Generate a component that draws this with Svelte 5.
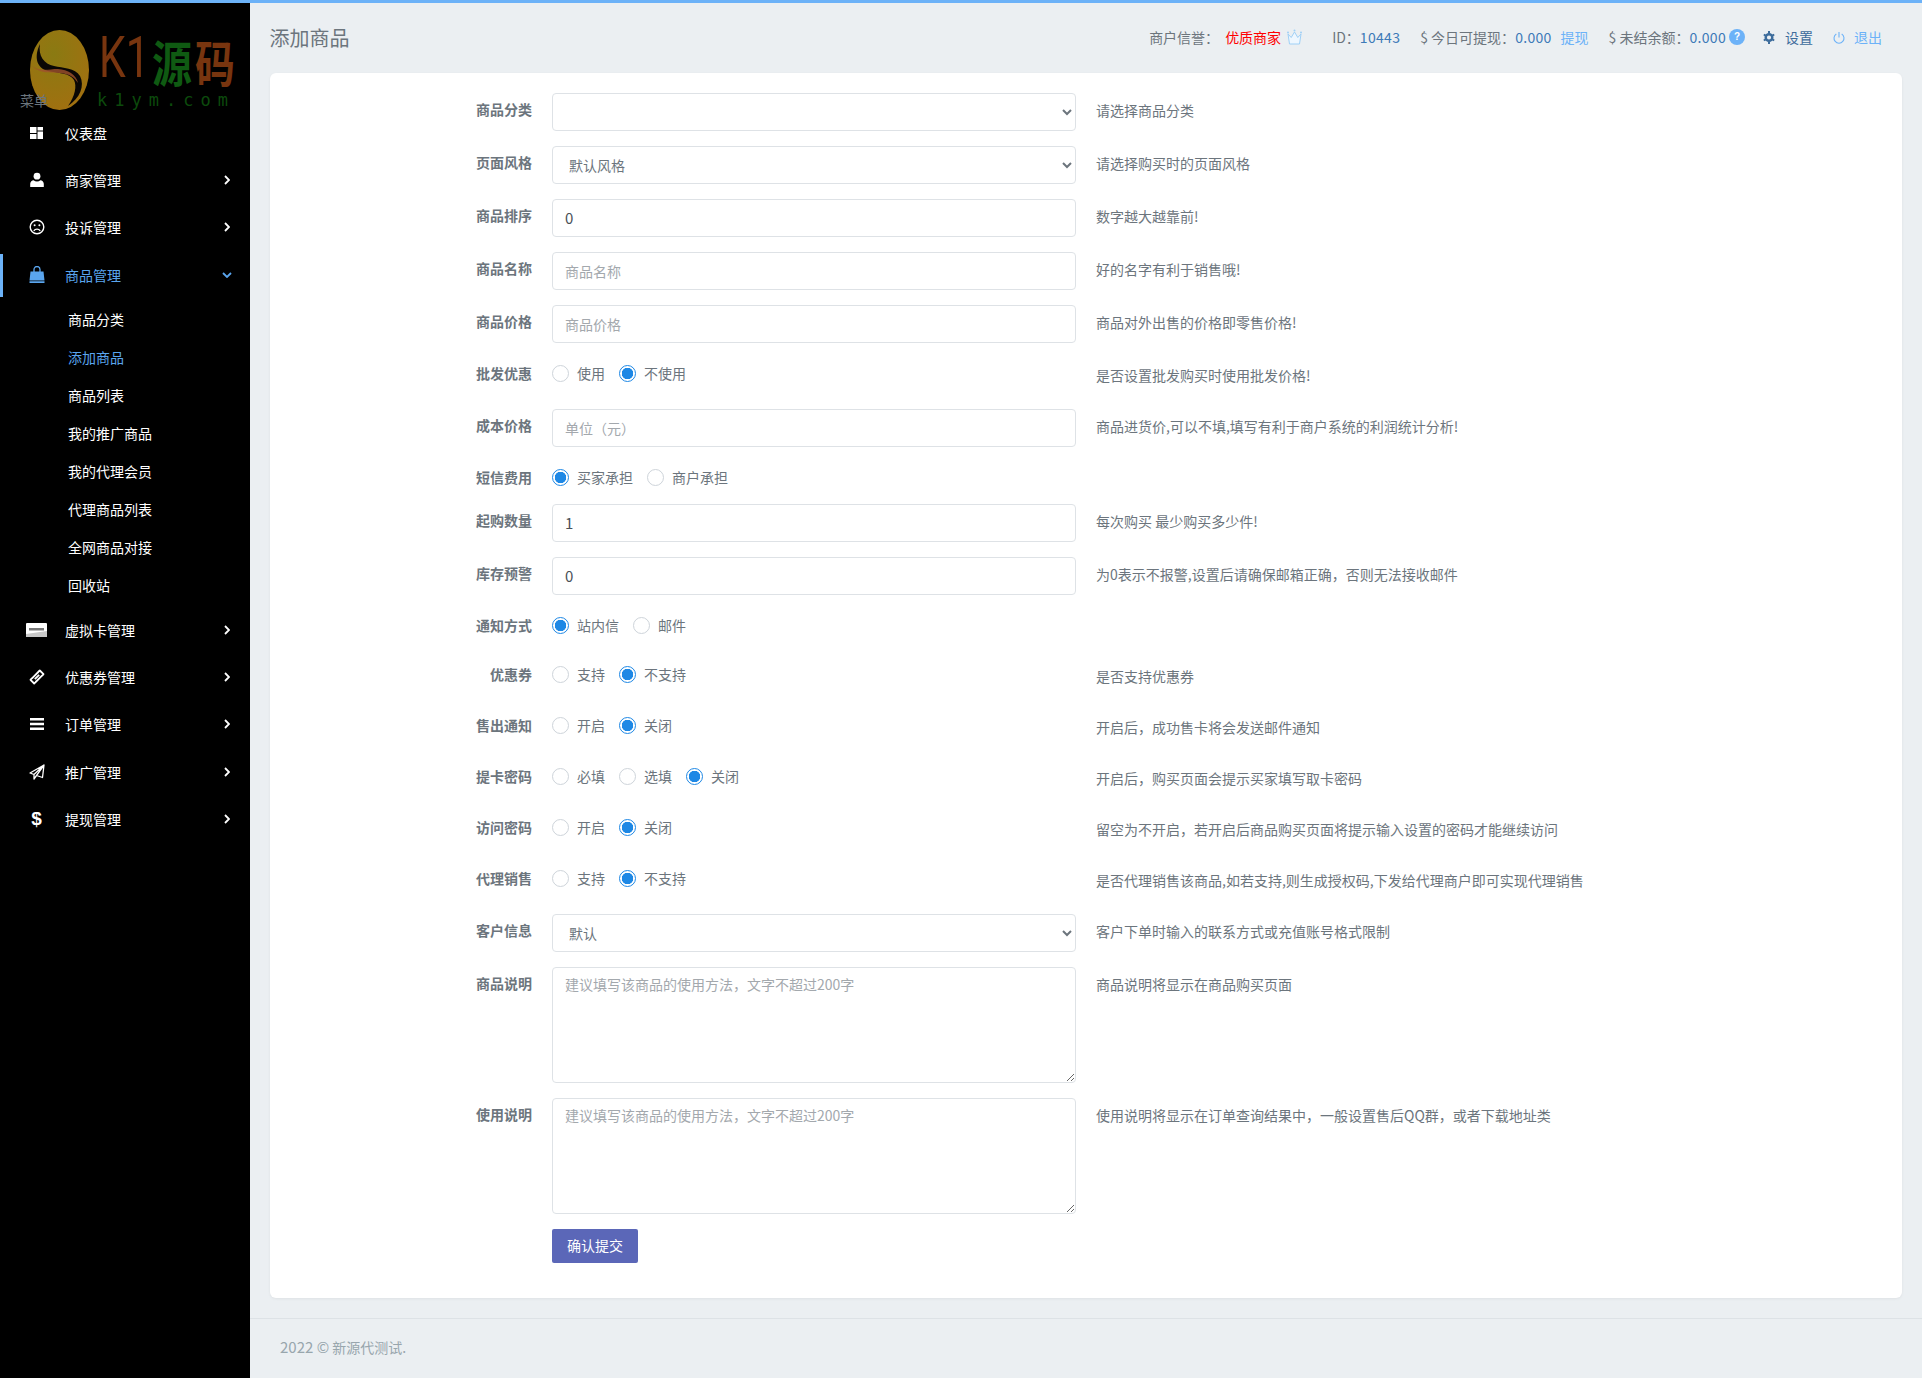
<script>
	const menu = [
		{ name: '仪表盘', icon: 'dash' },
		{ name: '商家管理', icon: 'user', more: true },
		{ name: '投诉管理', icon: 'frown', more: true },
		{ name: '商品管理', icon: 'bag', open: true },
		{ name: '虚拟卡管理', icon: 'card', more: true },
		{ name: '优惠券管理', icon: 'ticket', more: true },
		{ name: '订单管理', icon: 'bars', more: true },
		{ name: '推广管理', icon: 'plane', more: true },
		{ name: '提现管理', icon: 'dollar', more: true }
	];
	const subMenu = ['商品分类', '添加商品', '商品列表', '我的推广商品', '我的代理会员', '代理商品列表', '全网商品对接', '回收站'];

	const rows = [
		{ label: '商品分类', type: 'select', options: [''], help: '请选择商品分类' },
		{ label: '页面风格', type: 'select', options: ['默认风格'], help: '请选择购买时的页面风格' },
		{ label: '商品排序', type: 'input', value: '0', help: '数字越大越靠前!' },
		{ label: '商品名称', type: 'input', placeholder: '商品名称', help: '好的名字有利于销售哦!' },
		{ label: '商品价格', type: 'input', placeholder: '商品价格', help: '商品对外出售的价格即零售价格!' },
		{ label: '批发优惠', type: 'radio', options: ['使用', '不使用'], checked: 1, help: '是否设置批发购买时使用批发价格!' },
		{ label: '成本价格', type: 'input', placeholder: '单位（元）', help: '商品进货价,可以不填,填写有利于商户系统的利润统计分析!' },
		{ label: '短信费用', type: 'radio', options: ['买家承担', '商户承担'], checked: 0, size: 'short' },
		{ label: '起购数量', type: 'input', value: '1', help: '每次购买 最少购买多少件!' },
		{ label: '库存预警', type: 'input', value: '0', help: '为0表示不报警,设置后请确保邮箱正确，否则无法接收邮件' },
		{ label: '通知方式', type: 'radio', options: ['站内信', '邮件'], checked: 0, size: 'mid' },
		{ label: '优惠券', type: 'radio', options: ['支持', '不支持'], checked: 1, help: '是否支持优惠券' },
		{ label: '售出通知', type: 'radio', options: ['开启', '关闭'], checked: 1, help: '开启后，成功售卡将会发送邮件通知' },
		{ label: '提卡密码', type: 'radio', options: ['必填', '选填', '关闭'], checked: 2, help: '开启后，购买页面会提示买家填写取卡密码' },
		{ label: '访问密码', type: 'radio', options: ['开启', '关闭'], checked: 1, help: '留空为不开启，若开启后商品购买页面将提示输入设置的密码才能继续访问' },
		{ label: '代理销售', type: 'radio', options: ['支持', '不支持'], checked: 1, help: '是否代理销售该商品,如若支持,则生成授权码,下发给代理商户即可实现代理销售' },
		{ label: '客户信息', type: 'select', options: ['默认'], help: '客户下单时输入的联系方式或充值账号格式限制' },
		{ label: '商品说明', type: 'textarea', placeholder: '建议填写该商品的使用方法，文字不超过200字', help: '商品说明将显示在商品购买页面' },
		{ label: '使用说明', type: 'textarea', placeholder: '建议填写该商品的使用方法，文字不超过200字', help: '使用说明将显示在订单查询结果中，一般设置售后QQ群，或者下载地址类' }
	];
</script>

{#snippet icon(kind)}
	{#if kind === 'dash'}
		<svg width="14" height="14" viewBox="0 0 14 14"><path fill="currentColor" d="M0 1h6.500v6H0zM7.500 1H13v3.500H7.500zM0 8h6.500v5H0zM7.500 5.500H13V13H7.500z" /></svg>
	{:else if kind === 'user'}
		<svg width="16" height="16" viewBox="0 0 16 16"><circle cx="8" cy="4.200" r="3.400" fill="currentColor" /><path fill="currentColor" d="M1.200 15v-3.200C1.200 9.600 3 8.400 4.600 8.200c1 .8 2.100 1.200 3.400 1.200s2.400-.4 3.400-1.200c1.600.2 3.400 1.400 3.400 3.600V15z" /></svg>
	{:else if kind === 'frown'}
		<svg width="16" height="16" viewBox="0 0 16 16" fill="none" stroke="currentColor" stroke-width="1.400"><circle cx="8" cy="8" r="6.800" /><circle cx="5.600" cy="6.300" r="1" fill="currentColor" stroke="none" /><circle cx="10.400" cy="6.300" r="1" fill="currentColor" stroke="none" /><path d="M4.800 11.800c1.600-2.200 4.800-2.200 6.400 0" /></svg>
	{:else if kind === 'bag'}
		<svg width="16" height="17" viewBox="0 0 16 17"><path fill="currentColor" d="M1.500 5.500h13l1 9H.5zM.5 15.200h15V17H.5z" /><path fill="none" stroke="currentColor" stroke-width="1.300" d="M5 7V3.500a3 3 0 0 1 6 0V7" /></svg>
	{:else if kind === 'card'}
		<svg width="21" height="14" viewBox="0 0 21 14"><rect width="21" height="14" rx="1" fill="#fff" /><path fill="#777" d="M3 5h15v2.500H3z" /><path fill="#c8c8c8" d="M0 11l21-3v6H0z" /></svg>
	{:else if kind === 'ticket'}
		<svg width="16" height="16" viewBox="0 0 16 16"><path fill="none" stroke="currentColor" stroke-width="1.800" stroke-linejoin="round" d="M10.800 1.500 14.500 5.200c-.8 1-.8 1-1.500 1.500L6.700 13c-.5.700-.5.700-1.500 1.500L1.500 10.800c.8-1 .8-1 1.500-1.500L9.300 3c.5-.7.500-.7 1.500-1.500z" /><path fill="currentColor" d="M9.500 5.200l1.300 1.300-4.300 4.300-1.300-1.300z" /></svg>
	{:else if kind === 'bars'}
		<svg width="14" height="12" viewBox="0 0 14 12"><path fill="currentColor" d="M0 0h14v2.400H0zM0 4.800h14v2.400H0zM0 9.600h14V12H0z" /></svg>
	{:else if kind === 'plane'}
		<svg width="16" height="16" viewBox="0 0 16 16"><path fill="none" stroke="currentColor" stroke-width="1.300" stroke-linejoin="round" d="M15 1 1 9l4 1.500L15 1l-1.500 12.500-6-2zM5 10.500V15l2.500-3.500" /></svg>
	{:else if kind === 'dollar'}
		<span class="dollar">$</span>
	{/if}
{/snippet}

<div class="page">
	<aside class="sidebar">
		<div class="logo">
			<svg class="logo-mark" width="59" height="80" viewBox="0 0 59 80">
				<defs>
					<radialGradient id="gold" cx=".4" cy=".3" r=".8">
						<stop offset="0" stop-color="#8a7a12" />
						<stop offset="1" stop-color="#a36f10" />
					</radialGradient>
				</defs>
				<ellipse cx="29.500" cy="40" rx="29.500" ry="40" fill="url(#gold)" />
				<path fill="#0a0705" d="M10 14C4 26 6 38 18 41c10 2 22 2 26 9 3 6 1 16-6 26 12-8 17-20 12-30-5-8-17-8-26-10C14 34 8 26 10 14z" />
				<path fill="#a0522d" opacity=".8" d="M2 36c8 8 18 6 28 7 10 1 14 4 18 10-2-9-10-13-20-14-10 0-18 3-26-3z" />
			</svg>
			<div class="logo-text">
				<div class="logo-name"><span class="k1">K1</span><b class="yuan">源</b><b class="ma">码</b></div>
				<div class="logo-url">k1ym.com</div>
			</div>
			<span class="menu-title">菜单</span>
		</div>

		<nav>
			{#each menu as item}
				<div class="nav-item" class:active={item.open}>
					<span class="nav-icon">{@render icon(item.icon)}</span>
					<span class="nav-name">{item.name}</span>
					{#if item.more}
						<svg class="chevron" width="6" height="10" viewBox="0 0 6 10"><path fill="none" stroke="currentColor" stroke-width="1.800" d="M1 1l4 4-4 4" /></svg>
					{:else if item.open}
						<svg class="chevron open" width="10" height="6" viewBox="0 0 10 6"><path fill="none" stroke="currentColor" stroke-width="1.800" d="M1 1l4 4 4-4" /></svg>
					{/if}
				</div>
				{#if item.open}
					<div class="sub-menu">
						{#each subMenu as sub, i}
							<div class="sub-item" class:current={i === 1}>{sub}</div>
						{/each}
					</div>
				{/if}
			{/each}
		</nav>
	</aside>

	<div class="main">
		<header class="topbar">
			<h1>添加商品</h1>
			<div class="info">
				<span class="group">商户信誉：<span class="red">优质商家</span>
					<svg class="crown" width="17" height="17" viewBox="0 0 17 17"><path fill="#eef7ff" stroke="#9fd0f6" stroke-linejoin="round" d="M2 5l3.200 3.500L8.500 3l3.300 5.500L15 5l-1.500 10h-10z" /><circle cx="2" cy="3.500" r="1" fill="#9fd0f6" /><circle cx="8.500" cy="1.500" r="1" fill="#9fd0f6" /><circle cx="15" cy="3.500" r="1" fill="#9fd0f6" /></svg>
				</span>
				<span class="group id">ID：<span class="num">10443</span></span>
				<span class="group">$ 今日可提现：<span class="num">0.000</span><a href="#top" class="link">提现</a></span>
				<span class="group">$ 未结余额：<span class="num">0.000</span><span class="help-dot">?</span></span>
				<span class="group dark">
					<svg width="12" height="13" viewBox="0 0 12 13" fill="none" stroke="currentColor"><circle cx="6" cy="6.500" r="3.300" stroke-width="2.400" /><path stroke-width="2" d="M6 0v2.500M6 10.500V13M.8 3.500l2.200 1.300M9 8.200l2.200 1.300M.8 9.500 3 8.200M9 4.800l2.200-1.300" /></svg>
					设置
				</span>
				<span class="group light">
					<svg width="12" height="13" viewBox="0 0 12 13" fill="none" stroke="currentColor" stroke-width="1.100"><path d="M6 1v5.500" /><path d="M3.300 3a5 5 0 1 0 5.400 0" /></svg>
					退出
				</span>
			</div>
		</header>

		<section class="card">
			<form class="form">
				{#each rows as row}
					<div class="row {row.size ?? ''}" class:radio-row={row.type === 'radio'}>
						<!-- svelte-ignore a11y_label_has_associated_control -->
						<label class="row-label">{row.label}</label>
						<div class="control">
							{#if row.type === 'select'}
								<select class="field">
									{#each row.options as opt}<option>{opt}</option>{/each}
								</select>
							{:else if row.type === 'input'}
								<input class="field" type="text" value={row.value ?? ''} placeholder={row.placeholder} />
							{:else if row.type === 'textarea'}
								<textarea class="field area" placeholder={row.placeholder}></textarea>
							{:else}
								<div class="radios">
									{#each row.options as opt, i}
										<label class="radio">
											<input type="radio" name={row.label} checked={i === row.checked} />
											<span>{opt}</span>
										</label>
									{/each}
								</div>
							{/if}
						</div>
						{#if row.help}<div class="help">{row.help}</div>{/if}
					</div>
				{/each}
				<div class="row submit-row">
					<span></span>
					<button type="button" class="submit">确认提交</button>
				</div>
			</form>
		</section>

		<footer class="footer"><span class="year">2022 ©</span> 新源代测试.</footer>
	</div>
</div>

<style>
	:global(body) {
		margin: 0;
		background: #ebeff2;
		font-family: 'Noto Sans CJK SC', 'Liberation Sans', sans-serif;
		font-size: 14px;
		color: #6c757d;
	}

	.page {
		display: flex;
		min-height: 1378px;
		border-top: 3px solid #6cb2f8;
		box-sizing: border-box;
	}

	.sidebar {
		width: 250px;
		flex: none;
		background: #000;
		color: #fff;
	}

	.logo {
		position: relative;
		height: 106px;
		display: flex;
		padding: 27px 0 0 30px;
		box-sizing: border-box;
	}

	.logo-text {
		margin-left: 8px;
	}

	.logo-name {
		display: flex;
		align-items: flex-start;
		line-height: 48px;
		height: 50px;
		white-space: nowrap;
	}

	.k1 {
		font-family: Roboto, sans-serif;
		font-weight: 400;
		font-size: 50px;
		color: #78350f;
		transform: scale(0.85, 1.15);
		transform-origin: top left;
		margin-right: -6px;
		margin-left: 2px;
	}

	.yuan,
	.ma {
		font-size: 42px;
		transform: scale(0.95, 1.15);
		transform-origin: top left;
		margin-top: 4px;
	}

	.yuan {
		color: #0f5a12;
	}

	.ma {
		color: #78350f;
	}

	.logo-url {
		margin-top: 10px;
		font-family: 'DejaVu Sans Mono', monospace;
		font-size: 17px;
		line-height: 20px;
		letter-spacing: 7px;
		color: #0c4a0c;
		white-space: nowrap;
	}

	.menu-title {
		position: absolute;
		left: 20px;
		top: 87px;
		color: #6c757d;
		line-height: 20px;
	}

	.nav-item {
		position: relative;
		display: flex;
		align-items: center;
		height: 47.300px;
		padding: 0 20px 0 26px;
	}

	.nav-item.active {
		color: #5aa5ee;
	}

	.nav-item.active::before {
		content: '';
		position: absolute;
		left: 0;
		top: 3px;
		bottom: 1px;
		width: 3px;
		background: #6cb2f8;
	}

	.nav-icon {
		width: 21px;
		margin-right: 18px;
		display: flex;
		justify-content: center;
		align-items: center;
	}

	.nav-name {
		flex: 1;
	}

	.dollar {
		font: bold 19px/20px 'Liberation Sans', sans-serif;
	}

	.chevron {
		display: block;
	}

	.chevron.open {
		margin-right: -2px;
	}

	.sub-menu {
		padding: 2px 0;
	}

	.sub-item {
		height: 38px;
		line-height: 38px;
		padding-left: 68px;
	}

	.sub-item.current {
		color: #5aa5ee;
	}

	.main {
		flex: 1;
		min-width: 0;
	}

	.topbar {
		display: flex;
		justify-content: space-between;
		align-items: center;
		height: 70px;
		padding: 0 40px 2px 19.500px;
		box-sizing: border-box;
	}

	h1 {
		margin: 0;
		font-size: 20px;
		font-weight: 400;
		color: #6c757d;
	}

	.info {
		display: flex;
		align-items: center;
		gap: 20px;
	}

	.group {
		display: flex;
		align-items: center;
		white-space: nowrap;
	}

	.red {
		color: #f00;
		margin-left: 6px;
	}

	.crown {
		margin-left: 5px;
		margin-right: 9px;
	}

	.num {
		color: #3d7ab8;
		letter-spacing: 0.300px;
	}

	.link {
		color: #6cb2f8;
		text-decoration: none;
		margin-left: 9px;
	}

	.help-dot {
		width: 16px;
		height: 16px;
		margin-left: 3px;
		border-radius: 50%;
		background: #6cb2f8;
		color: #fff;
		font: bold 10px/16px 'Liberation Sans', sans-serif;
		text-align: center;
	}

	.dark {
		color: #3d6c9c;
		gap: 10px;
		margin-left: -2px;
	}

	.light {
		color: #6cb2f8;
		gap: 9px;
	}

	.card {
		margin: 0 20px 20px;
		background: #fff;
		border-radius: 6px;
		box-shadow: 0 1px 3px rgba(0, 0, 0, 0.06);
		height: 1225px;
		box-sizing: border-box;
		padding-top: 20px;
	}

	.form {
		display: flex;
		flex-direction: column;
		gap: 15px;
	}

	.row {
		display: grid;
		grid-template-columns: 262px 524px 1fr;
		column-gap: 20px;
		align-items: start;
	}

	.row-label {
		text-align: right;
		font-weight: 700;
		line-height: 21px;
		padding-top: 6px;
		color: #6c757d;
	}

	.radio-row {
		height: 36px;
	}

	.radio-row.short {
		height: 27px;
	}

	.radio-row.mid {
		height: 34px;
	}

	.radio-row .row-label {
		padding-top: 5px;
	}

	.help {
		line-height: 21px;
		padding-top: 7px;
	}

	.field {
		display: block;
		width: 100%;
		height: 38px;
		box-sizing: border-box;
		border: 1px solid #dee2e6;
		border-radius: 4px;
		background: #fff;
		padding: 0 12px;
		font: inherit;
		color: #6c757d;
		outline: none;
	}

	input.field {
		color: #495057;
		font-size: 15px;
		padding-bottom: 1px;
	}

	.field::placeholder {
		color: #a3a8ad;
		font-size: 14px;
	}

	.area {
		height: 116px;
		padding: 6px 12px;
		resize: vertical;
	}

	.radios {
		display: flex;
		gap: 14px;
		padding-top: 5px;
	}

	.radio {
		display: flex;
		align-items: center;
		gap: 8px;
		line-height: 21px;
	}

	.radio input {
		appearance: none;
		width: 17px;
		height: 17px;
		margin: 0;
		border: 1px solid #ced4da;
		border-radius: 50%;
		background: #fff;
	}

	.radio input:checked {
		border-color: #1e88e5;
		background: radial-gradient(circle, #1e88e5 0 5.500px, #fff 6px);
	}

	.submit {
		width: 86px;
		height: 34px;
		padding: 0 0 2px;
		border: 0;
		border-radius: 2px;
		background: #5b67b8;
		color: #fff;
		font: inherit;
	}

	.footer {
		height: 60px;
		line-height: 56px;
		border-top: 1px solid #dde2e6;
		padding-left: 30px;
		color: #98a6ad;
		box-sizing: border-box;
	}

	.year {
		font-size: 15px;
	}
</style>
